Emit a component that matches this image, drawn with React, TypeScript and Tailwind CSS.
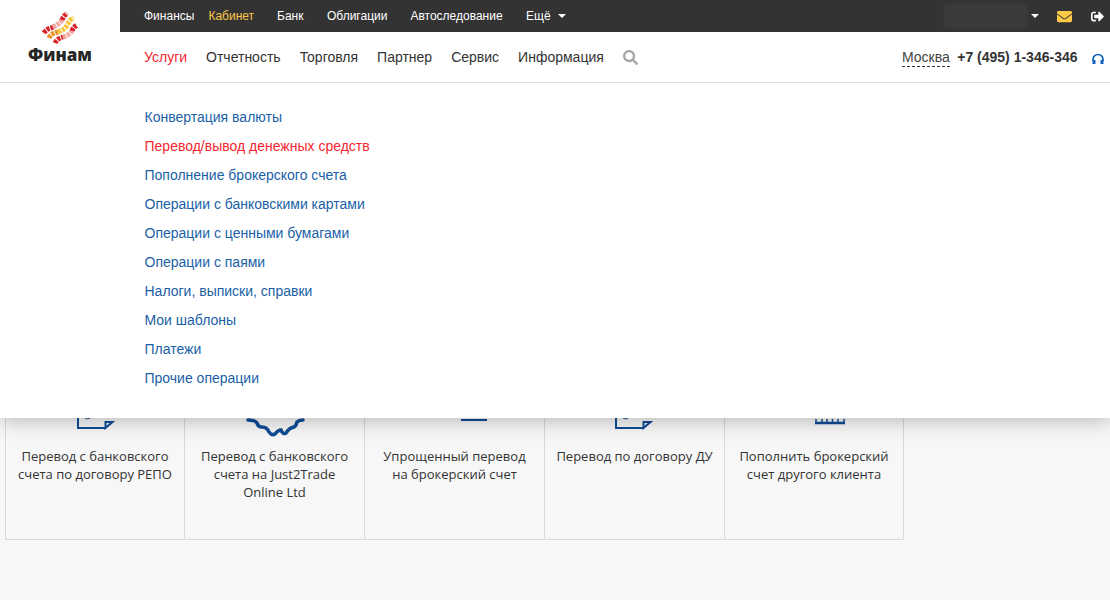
import React from "react";
import { FaSearch, FaEnvelope, FaSignOutAlt } from "react-icons/fa";

const topLinks = [
  { label: "Финансы", className: "ml-6 text-white" },
  { label: "Кабинет", className: "ml-[14px] text-[#fdc948]" },
  { label: "Банк", className: "ml-[23px] text-white" },
  { label: "Облигации", className: "ml-[23.5px] text-white" },
  { label: "Автоследование", className: "ml-[23px] text-white" },
  { label: "Ещё", className: "ml-[23.5px] text-white" },
];

const mainLinks = ["Отчетность", "Торговля", "Партнер", "Сервис", "Информация"];

const menuItems = [
  "Конвертация валюты",
  "Перевод/вывод денежных средств",
  "Пополнение брокерского счета",
  "Операции с банковскими картами",
  "Операции с ценными бумагами",
  "Операции с паями",
  "Налоги, выписки, справки",
  "Мои шаблоны",
  "Платежи",
  "Прочие операции",
];

const Caret = ({ className }: { className: string }) => (
  <span
    className={`inline-block w-0 h-0 border-x-[4px] border-x-transparent border-t-[4px] border-t-white ${className}`}
  />
);

const Logo = () => (
  <div className="w-[120px] h-[82px] shrink-0 flex flex-col items-center pt-[11px]">
    <svg width="38" height="34" viewBox="0 0 38 34" className="ml-[-1px]">
      <g fill="none" strokeWidth="5" strokeDasharray="3.2 1">
        {/* top stripe */}
        <path d="M3 22 C6 17 9 18 12 16" stroke="#d8232a" />
        <path d="M12 16 C16 14 19 12 21 9" stroke="#f6a5a0" />
        <path d="M21 9 C22 6 24 4 26 2" stroke="#d8232a" />
        {/* middle stripe */}
        <path d="M8 27 C10 23 13 22 17 21" stroke="#e8932b" />
        <path d="M17 21 C22 19 25 17 27 13 C28 10 30 8 33 7" stroke="#f8c53c" />
        {/* bottom stripe */}
        <path d="M14 32 C16 28 19 27 22 26" stroke="#d8232a" />
        <path d="M22 26 C26 25 29 23 31 20" stroke="#f6a5a0" />
        <path d="M31 20 C32 17 33 16 36 14" stroke="#d8232a" />
      </g>
    </svg>
    <span className="mt-[1px] text-[17px] leading-[18px] font-extrabold text-[#262626] font-['Open_Sans',sans-serif]">
      Финам
    </span>
  </div>
);

const Card = ({
  lines,
  icon,
  className,
}: {
  lines: string[];
  icon?: React.ReactNode;
  className: string;
}) => (
  <div
    className={`relative h-[179px] shrink-0 border-r border-[#d9d9d9] flex flex-col items-center pt-[87px] text-[13px] leading-[18px] text-[#333] text-center font-['Open_Sans',sans-serif] ${className}`}
  >
    {icon}
    {lines.map((line) => (
      <div key={line}>{line}</div>
    ))}
  </div>
);

const DocIcon = ({ className }: { className: string }) => (
  <svg
    width="38"
    height="16"
    viewBox="0 0 38 16"
    className={`absolute top-[55px] ${className}`}
    fill="none"
    stroke="#0f4c96"
    strokeWidth="2"
  >
    <path d="M1 0 V13 H28" />
    <path d="M28.5 13 L35.5 7 H28.5 Z" />
    <path d="M7 0 a3.5 4 0 0 0 7 0" strokeWidth="1" />
  </svg>
);

const App: React.FC = () => {
  return (
    <div className="relative w-[1110px] h-[600px] overflow-hidden bg-[#f7f7f7] font-['Liberation_Sans',sans-serif]">
      {/* cards behind the dropdown */}
      <div className="pt-[360px] pl-[5px]">
        <div className="flex w-[899px] border-l border-b border-[#d9d9d9]">
          <Card
            className="w-[179px]"
            lines={["Перевод с банковского", "счета по договору РЕПО"]}
            icon={<DocIcon className="left-[71px]" />}
          />
          <Card
            className="w-[180px]"
            lines={["Перевод с банковского", "счета на Just2Trade", "Online Ltd"]}
            icon={
              <svg
                width="60"
                height="22"
                viewBox="0 0 60 22"
                className="absolute left-[61px] top-[58px]"
                fill="none"
                stroke="#0f4c96"
                strokeWidth="3.5"
                strokeLinecap="round"
              >
                <path d="M2 2 Q9 2 11 5 Q12 9 16 9 Q21 9 23 14 Q26 18 29 16 Q32 12 35 12 Q37 17 40 15 Q43 10 48 9 Q50 8 51 4 Q53 2 57 2" />
              </svg>
            }
          />
          <Card
            className="w-[180px]"
            lines={["Упрощенный перевод", "на брокерский счет"]}
            icon={<span className="absolute left-[96px] top-[59px] w-[26px] h-[2px] bg-[#0f4c96]" />}
          />
          <Card
            className="w-[180px]"
            lines={["Перевод по договору ДУ"]}
            icon={<DocIcon className="left-[70px]" />}
          />
          <Card
            className="w-[179px]"
            lines={["Пополнить брокерский", "счет другого клиента"]}
            icon={
              <svg
                width="30"
                height="8"
                viewBox="0 0 30 8"
                className="absolute left-[90px] top-[58px]"
                fill="none"
                stroke="#0f4c96"
              >
                <path d="M0 5 H30" strokeWidth="2.5" />
                <path d="M1 1 V5 M7 1 V5 M12 1 V5 M17.5 1 V5 M23 1 V5 M29 1 V5" strokeWidth="1.5" />
              </svg>
            }
          />
        </div>
      </div>

      {/* header + open menu */}
      <div className="absolute inset-x-0 top-0 h-[418px] bg-white shadow-[0_0_22px_rgba(0,0,0,0.32)]">
        <div className="flex h-[83px] border-b border-[#e0e0e0]">
          <Logo />
          <div className="flex-1 min-w-0">
            <div className="flex items-center h-8 bg-[#333333] text-xs">
              {topLinks.map((link) => (
                <span key={link.label} className={link.className}>
                  {link.label}
                </span>
              ))}
              <Caret className="ml-[7px]" />
              <span className="ml-auto mr-[1px] w-[84px] h-[26px] bg-[#3a3a3a] blur-[1px]" />
              <Caret className="ml-[2px]" />
              <FaEnvelope className="ml-[18px] text-[#fdc948] text-[15px]" />
              <FaSignOutAlt className="ml-[19px] mr-[6px] text-white text-[13px]" />
            </div>
            <div className="flex items-center h-[50px] text-sm text-[#333]">
              <span className="ml-6 text-[#f32735]">Услуги</span>
              {mainLinks.map((link) => (
                <span key={link} className="ml-[19px]">
                  {link}
                </span>
              ))}
              <FaSearch className="ml-[19px] text-[#a8a8a8] text-[15px]" />
              <span className="ml-auto border-b border-dashed border-[#333] leading-[18px] text-[#444]">
                Москва
              </span>
              <span className="ml-[7.5px] font-bold">+7 (495) 1-346-346</span>
              <svg
                width="14"
                height="12"
                viewBox="0 0 14 12"
                className="ml-[13.5px] mr-[5px] mt-[4px]"
                fill="none"
                stroke="#0f62c0"
              >
                <path d="M2 8 V6.5 a5 5 0 0 1 10 0 V8" strokeWidth="1.7" />
                <path d="M3 7 V11 M11 7 V11" strokeWidth="3" />
              </svg>
            </div>
          </div>
        </div>
        <ul className="pl-[144.5px] pt-5 text-sm leading-[29px] text-[#1a5fa8]">
          {menuItems.map((item) => (
            <li key={item} className={item.startsWith("Перевод/") ? "text-[#f6262f]" : ""}>
              {item}
            </li>
          ))}
        </ul>
      </div>
    </div>
  );
};

export default App;
